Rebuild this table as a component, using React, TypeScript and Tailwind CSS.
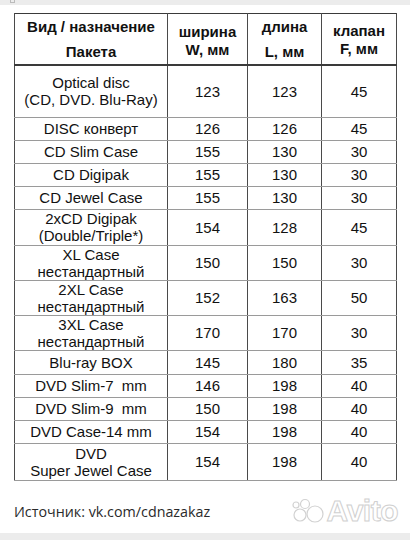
const rows: { name: string[]; w: number; l: number; f: number; h: string }[] = [
  { name: ['Optical disc', '(CD, DVD. Blu-Ray)'], w: 123, l: 123, f: 45, h: 'h-[52px]' },
  { name: ['DISC конверт'], w: 126, l: 126, f: 45, h: 'h-[23px]' },
  { name: ['CD Slim Case'], w: 155, l: 130, f: 30, h: 'h-[23px]' },
  { name: ['CD Digipak'], w: 155, l: 130, f: 30, h: 'h-[23px]' },
  { name: ['CD Jewel Case'], w: 155, l: 130, f: 30, h: 'h-[23px]' },
  { name: ['2xCD Digipak', '(Double/Triple*)'], w: 154, l: 128, f: 45, h: 'h-[36px]' },
  { name: ['XL Case', 'нестандартный'], w: 150, l: 150, f: 30, h: 'h-[35px]' },
  { name: ['2XL Case', 'нестандартный'], w: 152, l: 163, f: 50, h: 'h-[35px]' },
  { name: ['3XL Case', 'нестандартный'], w: 170, l: 170, f: 30, h: 'h-[35px]' },
  { name: ['Blu-ray BOX'], w: 145, l: 180, f: 35, h: 'h-[24px]' },
  { name: ['DVD Slim-7\u00a0 mm'], w: 146, l: 198, f: 40, h: 'h-[23px]' },
  { name: ['DVD Slim-9\u00a0 mm'], w: 150, l: 198, f: 40, h: 'h-[23px]' },
  { name: ['DVD Case-14 mm'], w: 154, l: 198, f: 40, h: 'h-[23px]' },
  { name: ['DVD', 'Super Jewel Case'], w: 154, l: 198, f: 40, h: 'h-[37px]' },
];

const cell = 'border-x border-x-[#4a4a4a] border-b border-b-[#9a9a9a] text-center align-middle p-0';

const AvitoMark = () => (
  <div className="absolute right-[12px] bottom-[14px] flex items-center gap-[2px] select-none">
    <svg width="34" height="26" viewBox="0 0 34 26">
      <g fill="#fff" stroke="#d2d2d2" strokeWidth="1.2">
        <circle cx="24" cy="16" r="8" />
        <circle cx="9" cy="17" r="6" />
        <circle cx="14" cy="6" r="4.5" />
        <circle cx="5" cy="7" r="3" />
      </g>
    </svg>
    <span
      className="text-[30px] font-bold leading-none text-white tracking-[-0.5px]"
      style={{ WebkitTextStroke: '1px #d0d0d0' }}
    >
      Avito
    </span>
  </div>
);

export default function App() {
  return (
    <div className="relative w-[410px] h-[540px] bg-white overflow-hidden font-['Liberation_Sans',Arial,sans-serif] text-[#111]">
      <div className="h-[5px] bg-[#ececec] relative">
        <div className="absolute left-[10px] top-0 w-[5px] h-[3px] border border-t-0 border-[#bbb]" />
      </div>

      <div className="pl-[14px] pt-[8px]">
        <table className="table-fixed border-collapse w-[382px] border border-[#3a3a3a]">
          <colgroup>
            <col className="w-[153px]" />
            <col className="w-[80px]" />
            <col className="w-[74px]" />
            <col className="w-[75px]" />
          </colgroup>
          <thead>
            <tr className="h-[51px]">
              <th className="border-x border-x-[#4a4a4a] border-b-2 border-b-[#3a3a3a] p-0 text-center align-middle text-[15px] font-bold leading-[25px]">
                Вид / назначение
                <br />
                Пакета
              </th>
              <th className="border-x border-x-[#4a4a4a] border-b-2 border-b-[#3a3a3a] p-0 pt-[4px] text-center align-middle text-[15px] font-bold leading-[18px]">
                ширина
                <br />
                W, мм
              </th>
              <th className="border-x border-x-[#4a4a4a] border-b-2 border-b-[#3a3a3a] p-0 text-center align-middle text-[15px] font-bold leading-[25px]">
                длина
                <br />
                L, мм
              </th>
              <th className="border-x border-x-[#4a4a4a] border-b-2 border-b-[#3a3a3a] p-0 pt-[2px] text-center align-middle text-[15px] font-bold leading-[18px]">
                клапан
                <br />
                F, мм
              </th>
            </tr>
          </thead>
          <tbody className="text-[15px] leading-[17px]">
            {rows.map((r, i) => (
              <tr key={i} className={r.h}>
                <td className={cell}>
                  {r.name.map((n, j) => (
                    <div key={j}>{n}</div>
                  ))}
                </td>
                <td className={cell}>{r.w}</td>
                <td className={cell}>{r.l}</td>
                <td className={cell}>{r.f}</td>
              </tr>
            ))}
          </tbody>
        </table>
      </div>

      <div className="pl-[14px] pt-[21px] text-[14.3px] leading-[20px] text-[#2a2a2a] font-['Open_Sans',sans-serif]">
        Источник: vk.com/cdnazakaz
      </div>

      <AvitoMark />

      <div className="absolute left-0 right-0 bottom-0 h-[7px] bg-[#ececec]" />
    </div>
  );
}
